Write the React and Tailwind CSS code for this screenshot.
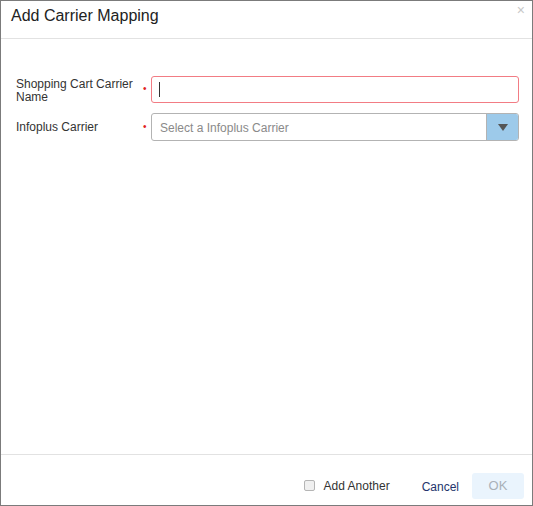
import React from "react";

export default function App() {
  return (
    <div
      className="w-[533px] h-[506px] bg-white border border-[#7b7b7b] flex flex-col text-[#333] text-[12px]"
      style={{ fontFamily: '"Liberation Sans", Arial, sans-serif' }}
    >
      <div className="h-[38px] border-b border-[#e2e2e2] flex items-start justify-between pl-[10px] pr-[7px] shrink-0">
        <div className="text-[16px] leading-[19px] mt-[5px] text-[#222]">Add Carrier Mapping</div>
        <div className="text-[#c8c8c8] text-[14px] leading-[14px] mt-[2px]">×</div>
      </div>
      <div className="flex-1 pl-[15px] pr-[13px] pt-[37px] flex flex-col gap-[10px]">
        <div className="flex items-start h-[27px]">
          <div className="w-[127px] leading-[13px] mt-[2px]">Shopping Cart Carrier Name</div>
          <div className="w-[8px] text-[#e02020] text-[10px] leading-none mt-[8px]">•</div>
          <div className="flex-1 h-[27px] border border-[#f27c84] rounded-[3px] flex items-center pl-[7px]">
            <div className="w-[1px] h-[15px] bg-[#333]"></div>
          </div>
        </div>
        <div className="flex items-center h-[28px]">
          <div className="w-[127px] leading-[13px] pt-[1px]">Infoplus Carrier</div>
          <div className="w-[8px] text-[#e02020] text-[10px] leading-none">•</div>
          <div className="flex-1 h-[28px] border border-[#b3b3b3] rounded-[3px] flex items-stretch overflow-hidden">
            <div className="flex-1 flex items-center pl-[8px] pt-[1px] text-[#8a8a8a]">Select a Infoplus Carrier</div>
            <div className="w-[32px] bg-[#9dcaea] border-l border-[#b3b3b3] flex items-center justify-center">
              <svg width="10" height="7" viewBox="0 0 10 7">
                <path d="M0 0 L10 0 L5 7 Z" fill="#555" />
              </svg>
            </div>
          </div>
        </div>
      </div>
      <div className="h-[51px] border-t border-[#e2e2e2] flex items-center justify-end pr-[8px] shrink-0 pt-[11px]">
        <div className="w-[11px] h-[11px] border border-[#b5b5b5] rounded-[2px] bg-[#f0f0f0] mr-[9px]"></div>
        <div className="mr-[32px]">Add Another</div>
        <div className="text-[#24346c] mr-[13px] mt-[2px]">Cancel</div>
        <div className="w-[52px] h-[26px] bg-[#eaf4fd] rounded-[3px] flex items-center justify-center text-[#a9b0b8] text-[13px] mt-[1px]">OK</div>
      </div>
    </div>
  );
}
